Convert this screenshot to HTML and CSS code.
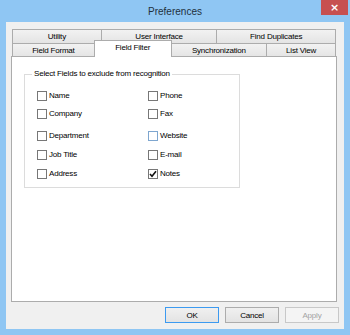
FILE: index.html
```html
<!DOCTYPE html>
<html lang="en">
<head>
  <meta charset="UTF-8" />
  <title>Preferences</title>
  <link rel="stylesheet" href="styles.css">
</head>
<body>
  <div class="window">
    <div class="titlebar">
      <span class="title">Preferences</span>
      <button class="close">×</button>
    </div>
    <div class="client">
      <!-- Pestañas en dos filas -->
      <div class="tabs">
        <div class="tab-row row-back">
          <div class="tab tab-utility">Utility</div>
          <div class="tab tab-ui">User Interface</div>
          <div class="tab tab-dupes">Find Duplicates</div>
        </div>
        <div class="tab-row row-front">
          <div class="tab tab-format">Field Format</div>
          <div class="tab tab-filter active">Field Filter</div>
          <div class="tab tab-sync">Synchronization</div>
          <div class="tab tab-list">List View</div>
        </div>
      </div>
      <div class="panel">
        <fieldset class="group">
          <legend>Select Fields to exclude from recognition</legend>
          <div class="fields">
            <label class="check"><span class="box"></span>Name</label>
            <label class="check"><span class="box"></span>Phone</label>
            <label class="check"><span class="box"></span>Company</label>
            <label class="check"><span class="box"></span>Fax</label>
            <label class="check"><span class="box"></span>Department</label>
            <label class="check"><span class="box hover"></span>Website</label>
            <label class="check"><span class="box"></span>Job Title</label>
            <label class="check"><span class="box"></span>E-mail</label>
            <label class="check"><span class="box"></span>Address</label>
            <label class="check">
              <span class="box">
                <svg width="8" height="8" viewBox="0 0 8 8"><path d="M1 4 L3 6.2 L7 1.2" fill="none" stroke="#111" stroke-width="1.6"/></svg>
              </span>Notes
            </label>
          </div>
        </fieldset>
      </div>
      <div class="buttons">
        <button class="btn default">OK</button>
        <button class="btn">Cancel</button>
        <button class="btn" disabled>Apply</button>
      </div>
    </div>
  </div>
</body>
</html>
```

FILE: styles.css
```css
* {
  margin: 0;
  padding: 0;
  box-sizing: border-box;
}
body {
  width: 350px;
  height: 335px;
  overflow: hidden;
  background: #8fc6f3;
  font-family: "Liberation Sans", Arial, sans-serif;
  font-size: 8px;
  letter-spacing: -0.2px;
  color: #000;
}
.window {
  height: 335px;
  display: flex;
  flex-direction: column;
}
/* Barra de título */
.titlebar {
  height: 22px;
  display: flex;
  align-items: center;
  justify-content: center;
  position: relative;
}
.title {
  font-size: 10px;
  letter-spacing: 0;
  color: #22303d;
  margin-top: 1px;
}
.close {
  position: absolute;
  top: 0;
  right: 2px;
  width: 27px;
  height: 15px;
  border: none;
  background: #c75050;
  color: #fff;
  font-family: "DejaVu Sans", sans-serif;
  font-size: 11px;
  font-weight: bold;
  line-height: 15px;
}
.client {
  height: 307px;
  margin: 0 6px;
  background: #f0f0f0;
  display: flex;
  flex-direction: column;
  padding: 7px 5px 6px 5px;
}
/* Pestañas */
.tabs {
  margin: 0 3px 0 1px;
}
.tab-row {
  display: flex;
  height: 14px;
  align-items: flex-end;
}
.tab {
  height: 14px;
  border: 1px solid #acacac;
  border-bottom: none;
  background: linear-gradient(#f2f2f2, #e4e4e4);
  text-align: center;
  line-height: 13px;
  margin-left: -1px;
}
.tab:first-child {
  margin-left: 0;
}
.tab-utility { width: 90px; }
.tab-ui { width: 117px; }
.tab-dupes { width: 120px; }
.tab-format { width: 83px; }
.tab-filter { width: 78px; }
.tab-sync { width: 97px; }
.tab-list { width: 70px; }
.tab.active {
  position: relative;
  z-index: 1;
  height: 17px;
  background: #fff;
  line-height: 14px;
}
.panel {
  height: 246px;
  margin: -1px 2px 0 0;
  border: 1px solid #acacac;
  background: #fff;
  padding: 12px 0 0 12px;
}
/* Grupo de casillas */
.group {
  width: 216px;
  border: 1px solid #dcdcdc;
  padding: 0 0 8px 12px;
}
.group legend {
  margin-left: -5px;
  padding: 0 2px;
  line-height: 10px;
}
.fields {
  display: grid;
  grid-template-columns: 111px auto;
  grid-template-rows: 18px 22px 19px 19px 10px;
  margin-top: 12px;
}
.check {
  display: flex;
  align-items: center;
  gap: 2px;
  height: 10px;
  line-height: 10px;
}
.box {
  width: 10px;
  height: 10px;
  border: 1px solid #777;
  background: #fff;
  display: flex;
  align-items: center;
  justify-content: center;
}
.box.hover {
  border-color: #7ea6cf;
}
/* Botones */
.buttons {
  display: flex;
  justify-content: flex-end;
  gap: 6px;
  margin-top: 5px;
}
.btn {
  width: 54px;
  height: 16px;
  border: 1px solid #acacac;
  background: linear-gradient(#f0f0f0, #e3e3e3);
  font-family: "Liberation Sans", Arial, sans-serif;
  font-size: 8px;
  letter-spacing: -0.2px;
  color: #000;
}
.btn.default {
  border-color: #3c9af0;
}
.btn:disabled {
  border-color: #c8c8c8;
  background: #f4f4f4;
  color: #a3a3a3;
}
```
